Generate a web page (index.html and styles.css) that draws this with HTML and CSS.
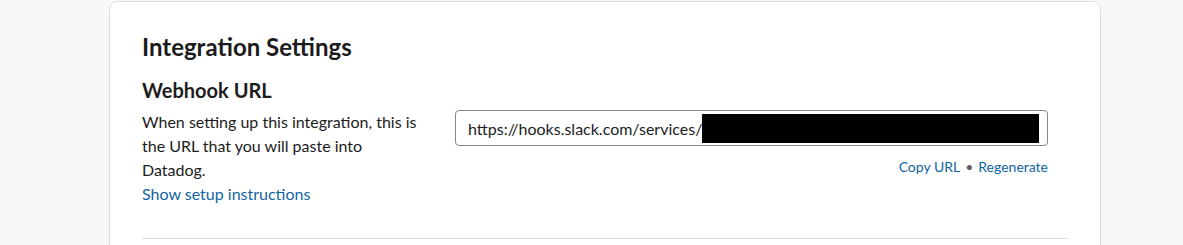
FILE: index.html
```html
<!DOCTYPE html>
<html>
<head>
<meta charset="utf-8">
<link rel="stylesheet" href="styles.css">
</head>
<body>
<div class="card">
  <h1 class="title">Integration Settings</h1>
  <h2 class="subtitle">Webhook URL</h2>
  <div class="row">
    <div class="desc">
      <p class="desc-text">When setting up this integration, this is the URL that you will paste into Datadog.</p>
      <a class="link" href="#">Show setup instructions</a>
    </div>
    <div class="field">
      <div class="input">
        <span class="url">https://hooks.slack.com/services/</span><span class="redact"></span>
      </div>
      <div class="actions">
        <a class="small-link" href="#">Copy URL</a><span class="dot">•</span><a class="small-link" href="#">Regenerate</a>
      </div>
    </div>
  </div>
  <hr class="divider">
</div>
</body>
</html>
```
FILE: styles.css
```css
html, body {
  margin: 0;
  padding: 0;
  background: #f8f8f8;
  font-family: Lato, "Noto Sans", sans-serif;
  color: #1d1c1d;
}
.card {
  margin: 1px 0 0 109px;
  width: 992px;
  height: 300px;
  background: #fff;
  border: 1px solid #dddddd;
  border-radius: 8px;
  padding: 29px 32px 0 32px;
  box-sizing: border-box;
}
.title {
  margin: 0;
  font-size: 24px;
  font-weight: 700;
  line-height: 32px;
}
.subtitle {
  margin: 13px 0 0 0;
  font-size: 20px;
  font-weight: 700;
  line-height: 28px;
}
.row {
  display: grid;
  grid-template-columns: 313px 593px;
  margin-top: 6px;
}
.desc-text {
  margin: 0;
  width: 285px;
  font-size: 16px;
  line-height: 24px;
}
.link {
  display: block;
  font-size: 16px;
  line-height: 24px;
  color: #1264a3;
  text-decoration: none;
}
.input {
  display: flex;
  align-items: center;
  height: 36px;
  box-sizing: border-box;
  border: 1px solid #868686;
  border-radius: 4px;
  padding: 0 8px 0 12px;
  font-size: 16px;
}
.redact {
  flex: 1;
  height: 29px;
  background: #000;
}
.actions {
  display: flex;
  justify-content: flex-end;
  align-items: center;
  margin-top: 11px;
  font-size: 14px;
  line-height: 20px;
}
.small-link {
  color: #1264a3;
  text-decoration: none;
}
.dot {
  color: #616061;
  margin: 0 5px;
}
.divider {
  margin: 32px 0 0 0;
  border: 0;
  border-top: 1px solid #dddddd;
}
```
